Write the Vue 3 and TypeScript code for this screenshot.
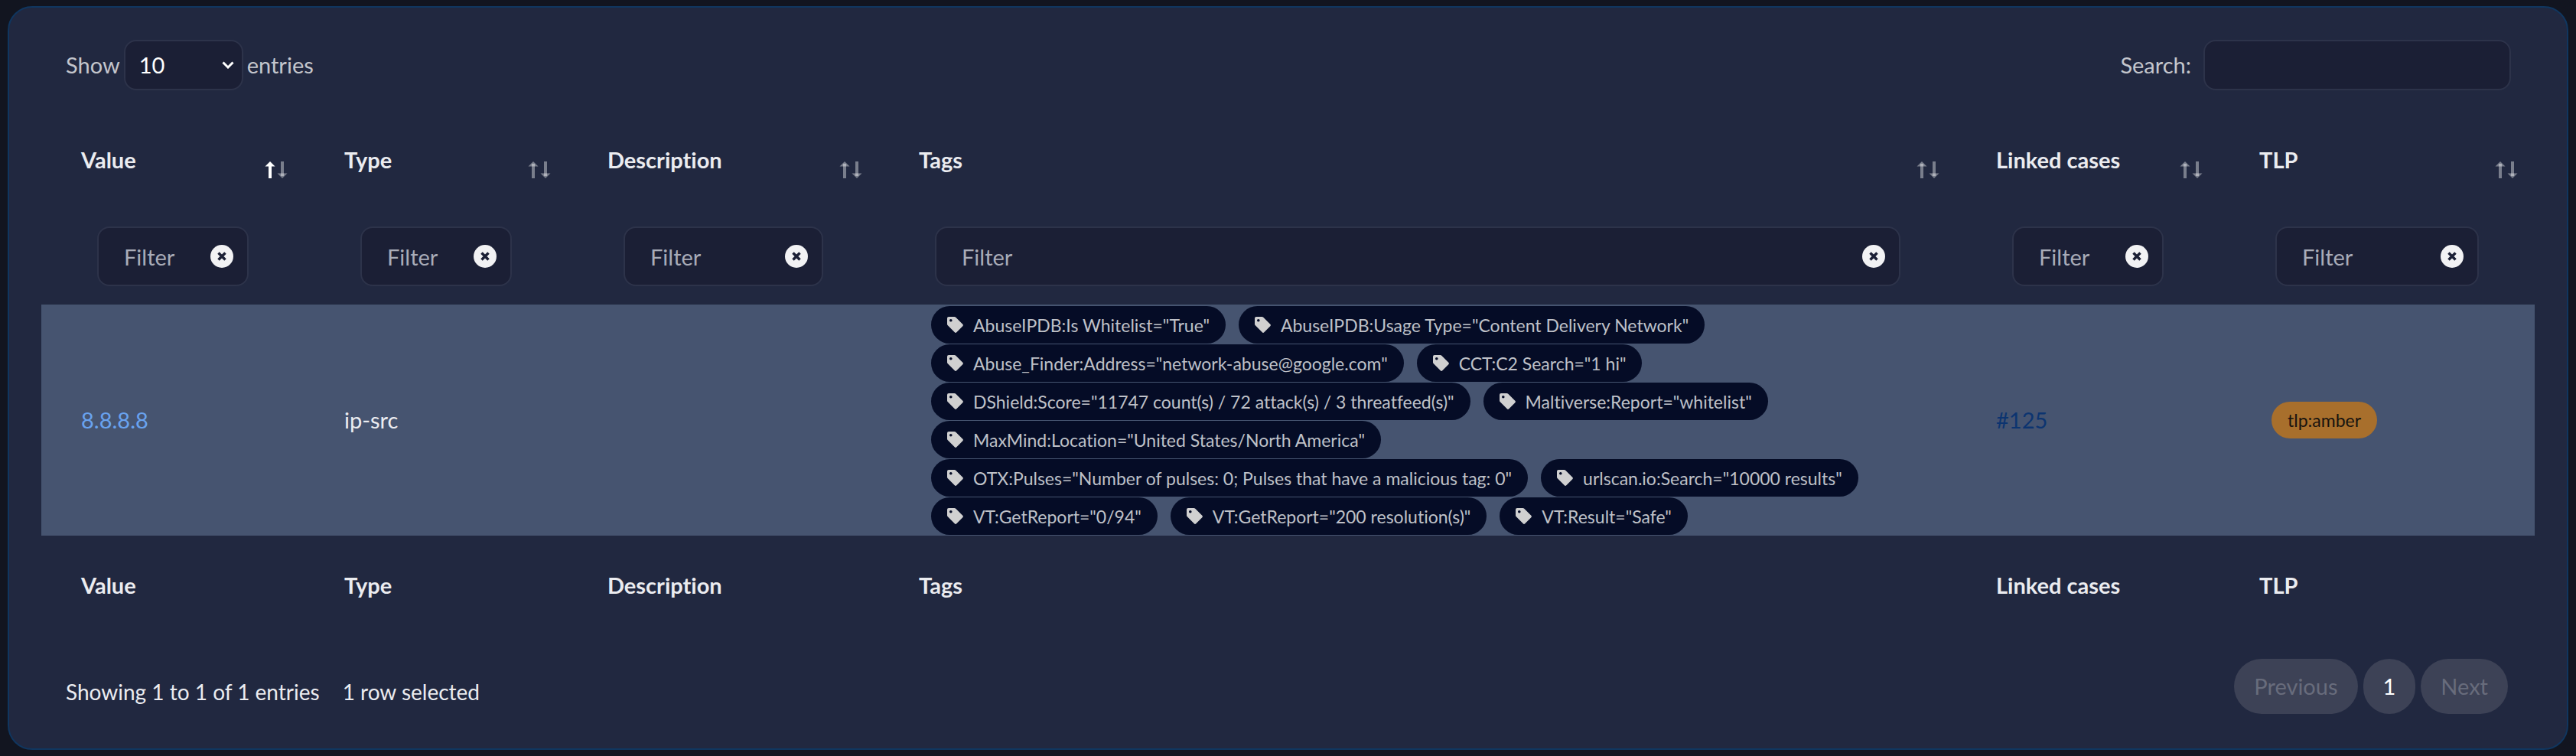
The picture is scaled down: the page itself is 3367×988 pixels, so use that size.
<script setup lang="ts">
import { ref } from 'vue'

interface Column {
  key: string
  label: string
  sorted?: boolean
}

const columns: Column[] = [
  { key: 'value', label: 'Value', sorted: true },
  { key: 'type', label: 'Type' },
  { key: 'description', label: 'Description' },
  { key: 'tags', label: 'Tags' },
  { key: 'cases', label: 'Linked cases' },
  { key: 'tlp', label: 'TLP' },
]

const tags: string[] = [
  'AbuseIPDB:Is Whitelist="True"',
  'AbuseIPDB:Usage Type="Content Delivery Network"',
  'Abuse_Finder:Address="network-abuse@google.com"',
  'CCT:C2 Search="1 hi"',
  'DShield:Score="11747 count(s) / 72 attack(s) / 3 threatfeed(s)"',
  'Maltiverse:Report="whitelist"',
  'MaxMind:Location="United States/North America"',
  'OTX:Pulses="Number of pulses: 0; Pulses that have a malicious tag: 0"',
  'urlscan.io:Search="10000 results"',
  'VT:GetReport="0/94"',
  'VT:GetReport="200 resolution(s)"',
  'VT:Result="Safe"',
]

const pageLength = ref('10')
const search = ref('')
const filters = ref<Record<string, string>>({})
</script>

<template>
  <main class="card">
    <div class="toolbar">
      <label class="length">
        <span>Show</span>
        <span class="select-wrap">
          <select v-model="pageLength">
            <option>10</option>
            <option>25</option>
            <option>50</option>
            <option>100</option>
          </select>
          <svg class="chevron" viewBox="0 0 16 10" aria-hidden="true">
            <path d="M1.5 1.5 8 8l6.500-6.500" fill="none" stroke="#fff" stroke-width="3" />
          </svg>
        </span>
        <span>entries</span>
      </label>
      <label class="search">
        <span>Search:</span>
        <input v-model="search" type="search" />
      </label>
    </div>

    <table>
      <colgroup>
        <col v-for="c in columns" :key="c.key" :class="'col-' + c.key" />
      </colgroup>
      <thead>
        <tr class="titles">
          <th v-for="c in columns" :key="c.key" scope="col">
            <button class="sort" type="button" :class="{ asc: c.sorted }">
              <span>{{ c.label }}</span>
              <svg class="arrows" viewBox="0 0 30 24" aria-hidden="true">
                <path class="shaft up" d="M7 23V4" />
                <path class="head up" d="M0.500 7.500 7 1l6.500 6.500Z" />
                <path class="shaft down" d="M23 1v19" />
                <path class="head down" d="M16.500 16.500 23 23l6.500-6.500Z" />
              </svg>
            </button>
          </th>
        </tr>
        <tr class="filters">
          <th v-for="c in columns" :key="c.key">
            <div class="filter">
              <input v-model="filters[c.key]" type="text" placeholder="Filter" :aria-label="'Filter ' + c.label" />
              <button type="button" class="clear" :aria-label="'Clear ' + c.label" @click="filters[c.key] = ''">
                <svg viewBox="0 0 30 30" aria-hidden="true">
                  <circle cx="15" cy="15" r="15" fill="#f2f2f4" />
                  <path d="M10.500 10.500l9 9M19.500 10.500l-9 9" stroke="#1b1f35" stroke-width="3.500" />
                </svg>
              </button>
            </div>
          </th>
        </tr>
      </thead>
      <tbody>
        <tr>
          <td><a class="value-link" href="#">8.8.8.8</a></td>
          <td>ip-src</td>
          <td></td>
          <td class="tag-cell">
            <div class="tags">
              <span v-for="t in tags" :key="t" class="tag">
                <svg viewBox="0 0 21 21" aria-hidden="true">
                  <path
                    fill="#d0d0d0"
                    fill-rule="evenodd"
                    d="M0 2Q0 0 2 0h7.500Q10.500 0 11.300.8l9 9Q21.500 11 20.300 12.200l-8 8Q11 21.500 9.800 20.300l-9-9Q0 10.500 0 9.500ZM4.800 3a1.800 1.800 0 1 0 0 3.600 1.800 1.800 0 0 0 0-3.600Z"
                  />
                </svg>
                {{ t }}
              </span>
            </div>
          </td>
          <td><a class="case-link" href="#">#125</a></td>
          <td><span class="tlp">tlp:amber</span></td>
        </tr>
      </tbody>
      <tfoot>
        <tr>
          <th v-for="c in columns" :key="c.key">{{ c.label }}</th>
        </tr>
      </tfoot>
    </table>

    <div class="bottom">
      <p class="info"><span>Showing 1 to 1 of 1 entries</span><span>1 row selected</span></p>
      <nav class="pages" aria-label="Pagination">
        <button type="button" disabled>Previous</button>
        <button type="button" class="current">1</button>
        <button type="button" disabled>Next</button>
      </nav>
    </div>
  </main>
</template>

<style>
body {
  background: #121520;
}
</style>

<style scoped>
* {
  box-sizing: border-box;
}
.card {
  margin: 8px 10px;
  padding: 42px 42px 45px;
  border: 2px solid #10365f;
  border-radius: 32px;
  background: #212840;
  color: #ebecf0;
  font-family: Lato, sans-serif;
  font-size: 29px;
  line-height: 40px;
  font-variant-ligatures: none;
}
button,
input,
select {
  font: inherit;
  color: inherit;
  font-variant-ligatures: none;
}
button {
  border: 0;
  padding: 0;
  background: none;
}
.toolbar {
  display: flex;
  justify-content: space-between;
  padding: 0 31px 0 32px;
  color: #c4c6cd;
}
.length,
.search {
  display: flex;
  align-items: center;
}
.length {
  gap: 5px;
}
.search {
  gap: 16px;
}
.select-wrap {
  position: relative;
  display: flex;
}
select,
input {
  border: 2px solid #2d334a;
  border-radius: 16px;
  background: #1b1f35;
  outline: 0;
}
select {
  appearance: none;
  width: 156px;
  height: 66px;
  padding: 0 18px;
  color: #fff;
}
.chevron {
  position: absolute;
  right: 12px;
  top: 28px;
  width: 16px;
  height: 10px;
}
.search input {
  width: 402px;
  height: 66px;
  padding: 0 16px;
}
table {
  width: 100%;
  margin-top: 61px;
  table-layout: fixed;
  border-collapse: collapse;
}
.col-value,
.col-type,
.col-cases {
  width: 344px;
}
.col-description {
  width: 407px;
}
.col-tlp {
  width: 412px;
}
th,
td {
  padding: 0 52px;
  text-align: left;
  font-weight: 400;
}
.titles th {
  height: 96px;
  padding-right: 22px;
  vertical-align: top;
}
.sort {
  display: flex;
  justify-content: space-between;
  width: 100%;
  padding-top: 10px;
  font-weight: 700;
}
.arrows {
  width: 30px;
  height: 24px;
  margin-top: 21px;
}
.shaft {
  fill: none;
  stroke: #fff;
  stroke-width: 4;
}
.head {
  fill: #fff;
}
.up,
.down {
  opacity: 0.4;
}
.asc .up {
  opacity: 1;
}
.filters th {
  height: 123px;
  padding: 21px 73px 24px;
}
.filter {
  position: relative;
  display: flex;
}
.filter input {
  width: 100%;
  min-width: 0;
  height: 78px;
  padding: 0 56px 0 33px;
}
.filter input::placeholder {
  color: #a9acb8;
  opacity: 1;
}
.clear {
  position: absolute;
  top: 24px;
  right: 20px;
  width: 30px;
  height: 30px;
}
.clear svg {
  display: block;
}
tbody td {
  height: 302px;
  background: #465470;
}
.tag-cell {
  padding: 2px 52px 1px 68px;
}
.tags {
  display: flex;
  flex-wrap: wrap;
  gap: 1px 17px;
}
.tag {
  display: flex;
  align-items: center;
  gap: 13px;
  height: 49px;
  padding: 0 21px;
  border-radius: 25px;
  background: #050c26;
  color: #bfc1c8;
  font-size: 23px;
  white-space: nowrap;
}
.tag svg {
  width: 21px;
  height: 21px;
}
a {
  text-decoration: none;
}
.value-link {
  color: #69a3f0;
}
.case-link {
  color: #0c3470;
}
.tlp {
  display: inline-block;
  margin-left: 16px;
  padding: 0 21px;
  border-radius: 24px;
  background: #a86f2c;
  color: #17130f;
  font-size: 23px;
  line-height: 48px;
  vertical-align: middle;
}
tfoot th {
  height: 130px;
  font-weight: 700;
}
.bottom {
  display: flex;
  justify-content: space-between;
  align-items: center;
  margin-top: 31px;
  padding: 0 35px 0 32px;
}
.info {
  display: flex;
  gap: 30px;
  margin: 14px 0 0;
  font-size: 28px;
}
.pages {
  display: flex;
  gap: 7px;
}
.pages button {
  height: 72px;
  padding: 0 26px;
  border-radius: 36px;
  background: #3d4256;
  color: #fff;
}
.pages button:disabled {
  color: #686c7c;
}
</style>
